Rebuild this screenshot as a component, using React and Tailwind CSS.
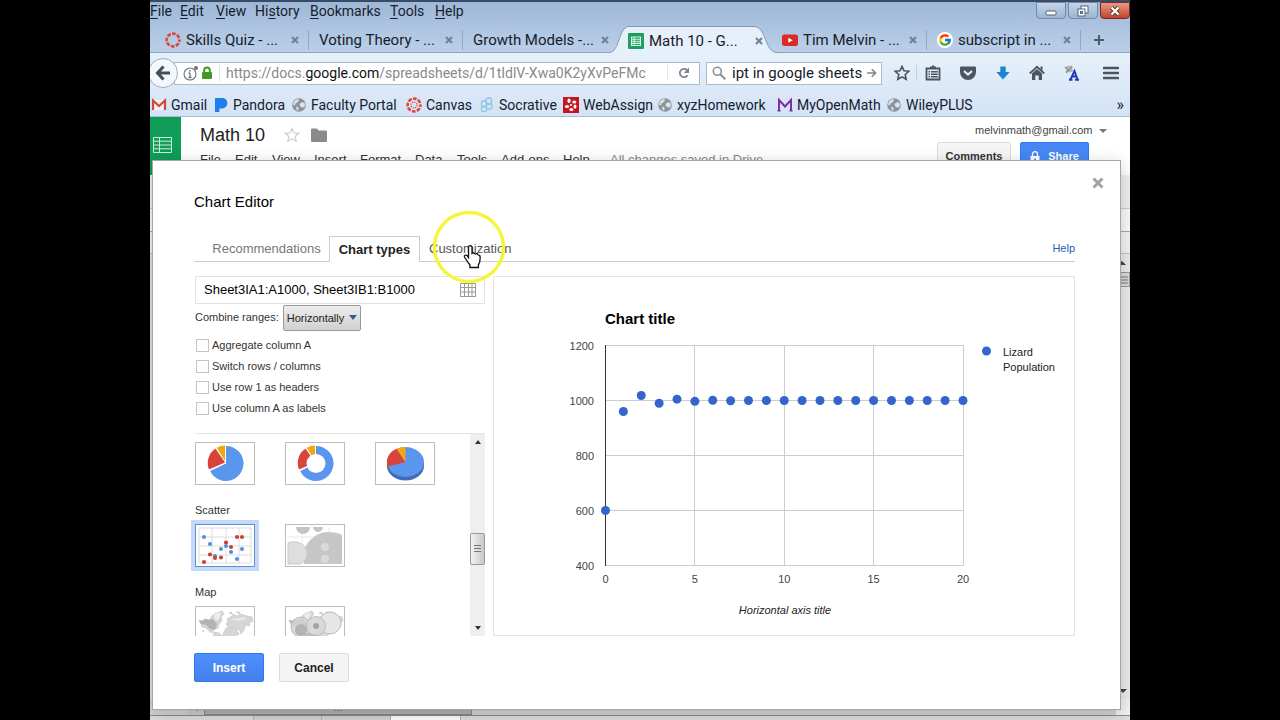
import React from "react";
import { FcGoogle } from "react-icons/fc";

const points = [600, 960, 1018, 990, 1005, 997, 1001, 999, 1000, 1000, 1000, 1000, 1000, 1000, 1000, 1000, 1000, 1000, 1000, 1000, 1000];

/* ---------- small icons ---------- */

const CanvasIcon = () => (
  <svg viewBox="0 0 16 16" className="size-4 shrink-0">
    <circle cx="8" cy="8" r="6.4" fill="none" stroke="#e0453a" strokeWidth="2.6" strokeDasharray="3.7 1.33" strokeDashoffset="1.8" />
  </svg>
);
const CanvasDottedIcon = () => (
  <svg viewBox="0 0 16 16" className="size-4 shrink-0">
    <circle cx="8" cy="8" r="6.4" fill="none" stroke="#e0453a" strokeWidth="2.6" strokeDasharray="3.7 1.33" strokeDashoffset="1.8" />
    <circle cx="8" cy="8" r="3" fill="none" stroke="#e0453a" strokeWidth="1.3" strokeDasharray="1.2 1.16" />
  </svg>
);
const SheetsIcon = () => (
  <svg viewBox="0 0 16 16" className="size-4 shrink-0">
    <rect width="16" height="16" rx="1" fill="#1e9e5d" />
    <path d="M3.5 4h9v8.5h-9zM3.5 6.2h9M3.5 8.3h9M3.5 10.4h9M6.2 4v8.5" fill="none" stroke="#d8f5e3" strokeWidth="1.1" />
  </svg>
);
const YoutubeIcon = () => (
  <svg viewBox="0 0 16 16" className="size-4 shrink-0">
    <rect x="0" y="2.5" width="16" height="11.5" rx="2.5" fill="#d92a27" />
    <path d="M6.3 5.8v5l4.4-2.5z" fill="#fff" />
  </svg>
);
const GoogleIcon = () => (
  <span className="flex size-4 shrink-0 items-center justify-center rounded-full bg-white">
    <FcGoogle className="size-3.5" />
  </span>
);
const GmailIcon = () => (
  <svg viewBox="0 0 16 16" className="size-4 shrink-0">
    <rect x="2" y="3" width="12" height="10" fill="#f4f4f4" />
    <path d="M2 13V3.5l6 5.5 6-5.5V13" fill="none" stroke="#d6453c" strokeWidth="2.2" />
  </svg>
);
const PandoraIcon = () => (
  <svg viewBox="0 0 16 16" className="size-4 shrink-0">
    <path d="M2 1h6.5c3.8 0 5.8 2 5.8 4.9 0 3.6-2.6 5.6-6.3 5.6H6.4V15H2z" fill="#1e7df0" />
  </svg>
);
const GlobeIcon = () => (
  <svg viewBox="0 0 16 16" className="size-4 shrink-0">
    <circle cx="8" cy="8" r="6.8" fill="#8d939a" />
    <path d="M3 4.5c2-2.3 4-2.4 5-2l-1 2.6-2.4 1.2L4 8.6 2 7.4zM8.6 6.8l3-1.7 2.4 1.7-.6 3.4-2.6.4-2-1.8zM5.2 9.6l2.4.9-.4 3-1.6-.5z" fill="#dde3ea" />
  </svg>
);
const SocrativeIcon = () => (
  <svg viewBox="0 0 16 16" className="size-4 shrink-0" fill="none" stroke="#8cc6e0" strokeWidth="1.3">
    <rect x="7" y="1" width="5.5" height="6" rx="2" />
    <rect x="2.5" y="4" width="5" height="5.5" rx="1.8" />
    <rect x="7.5" y="7" width="5.5" height="5" rx="1.8" />
    <rect x="2.5" y="9.5" width="5" height="5" rx="1.8" />
  </svg>
);
const WebAssignIcon = () => (
  <svg viewBox="0 0 16 16" className="size-4 shrink-0">
    <rect width="16" height="16" fill="#c5161d" />
    <g fill="#fff">
      <ellipse cx="6" cy="3.8" rx="1.6" ry="2.2" />
      <ellipse cx="11.3" cy="5" rx="2.1" ry="1.6" />
      <ellipse cx="12" cy="9.6" rx="1.5" ry="2.1" />
      <ellipse cx="8.4" cy="12.6" rx="2" ry="1.5" />
      <ellipse cx="4" cy="9.4" rx="2.1" ry="1.5" />
      <circle cx="8" cy="8" r="1.1" />
    </g>
  </svg>
);
const MomIcon = () => (
  <svg viewBox="0 0 16 16" className="size-4 shrink-0">
    <path d="M.5 13.6h3M2 13.5V3l6 6.5L14 3v10.5M12.5 13.6h3" fill="none" stroke="#7a2a9c" strokeWidth="1.9" />
  </svg>
);
const Cross = ({ className }) => (
  <svg viewBox="0 0 8 8" className={className}>
    <path d="M1 1l6 6M7 1L1 7" stroke="currentColor" strokeWidth="2" />
  </svg>
);

/* ---------- browser chrome ---------- */

const menus = [
  ["", "F", "ile"],
  ["", "E", "dit"],
  ["", "V", "iew"],
  ["Hi", "s", "tory"],
  ["", "B", "ookmarks"],
  ["", "T", "ools"],
  ["", "H", "elp"],
];

function TitleBar() {
  return (
    <div className="flex h-[26px] items-start justify-between border-t-2 border-[#3b4a63]">
      <div className="grid grid-cols-[30px_36px_39px_55px_80px_45px_45px] text-sm leading-[18px] text-[#16202c]">
        {menus.map(([a, b, c]) => (
          <button key={b + c} className="text-left whitespace-nowrap">
            {a}
            <span className="underline underline-offset-2">{b}</span>
            {c}
          </button>
        ))}
      </div>
      <div className="flex gap-0.5 text-[#2c3a4c]">
        <button aria-label="Minimize" className="flex h-[17px] w-[30px] items-center justify-center rounded-b-sm border border-[#7489a5] bg-linear-to-b from-[#c3d4e8] to-[#9db5d2]">
          <svg viewBox="0 0 12 12" className="size-3"><rect x="1" y="6" width="10" height="4" rx="1" fill="#fff" stroke="#52627a" /></svg>
        </button>
        <button aria-label="Restore" className="flex h-[17px] w-[30px] items-center justify-center rounded-b-sm border border-[#7489a5] bg-linear-to-b from-[#c3d4e8] to-[#9db5d2]">
          <svg viewBox="0 0 12 12" className="size-3" fill="#fff" stroke="#52627a"><rect x="4" y="1" width="7" height="7" /><rect x="1" y="4" width="7" height="7" /><rect x="3.5" y="6.5" width="2" height="2" fill="#9db5d2" /></svg>
        </button>
        <button aria-label="Close" className="flex h-[17px] w-[30px] items-center justify-center rounded-b-sm border border-[#7b2a22] bg-linear-to-b from-[#e59a86] to-[#c2412b]">
          <svg viewBox="0 0 12 12" className="size-3"><path d="M2.5 2.5l7 7M9.5 2.5l-7 7" stroke="#52302c" strokeWidth="4" /><path d="M2.5 2.5l7 7M9.5 2.5l-7 7" stroke="#fff" strokeWidth="2.4" /></svg>
        </button>
      </div>
    </div>
  );
}

function Tab({ icon, title }) {
  return (
    <div className="flex w-[154px] items-center gap-[5px] border-b border-[#8fa5c0] pt-0.5 pl-2.5">
      {icon}
      <button className="flex-1 text-left whitespace-nowrap">{title}</button>
      <button aria-label="Close tab"><Cross className="size-2 text-[#6f8097]" /></button>
      <span className="ml-1 h-5 w-px bg-[#92a7c3]" />
    </div>
  );
}

function TabStrip() {
  return (
    <div className="flex h-[27px] text-[15px] leading-5 text-[#16202c]">
      <div className="w-[5px] border-b border-[#8fa5c0]" />
      <Tab icon={<CanvasIcon />} title="Skills Quiz - ..." />
      <Tab title="Voting Theory - ..." />
      <div className="flex w-[146px] items-center border-b border-[#8fa5c0] pt-0.5 pl-2.5">
        <button className="flex-1 text-left whitespace-nowrap">Growth Models -...</button>
        <button aria-label="Close tab"><Cross className="size-2 text-[#6f8097]" /></button>
      </div>
      <div className="relative flex w-[173px] items-center gap-[5px] pt-0.5 pr-[19px] pl-[19px]">
        <svg viewBox="0 0 173 27" preserveAspectRatio="none" className="absolute inset-0 h-full w-full">
          <path d="M0 26.5C11 26.5 9 1 20 .5H145C158 1 155 26 168 26.5H173V27H0z" fill="#e6f0fa" />
          <path d="M0 26.5C11 26.5 9 1 20 .5H145C158 1 155 26 168 26.5H173" fill="none" stroke="#8098b6" />
        </svg>
        <div className="relative"><SheetsIcon /></div>
        <button className="relative flex-1 text-left whitespace-nowrap">Math 10 - G...</button>
        <button aria-label="Close tab" className="relative"><Cross className="size-2 text-[#6f8097]" /></button>
      </div>
      <div className="flex w-[145px] items-center gap-[5px] border-b border-[#8fa5c0] pt-0.5">
        <YoutubeIcon />
        <button className="flex-1 text-left whitespace-nowrap">Tim Melvin - ...</button>
        <button aria-label="Close tab"><Cross className="size-2 text-[#6f8097]" /></button>
        <span className="ml-1 h-5 w-px bg-[#92a7c3]" />
      </div>
      <Tab icon={<GoogleIcon />} title="subscript in ..." />
      <button aria-label="New tab" className="flex flex-1 items-center border-b border-[#8fa5c0] pt-0.5 pl-[13px]">
        <svg viewBox="0 0 10 10" className="size-2.5"><path d="M5 0v10M0 5h10" stroke="#4d5b6d" strokeWidth="2" /></svg>
      </button>
    </div>
  );
}

function NavBar() {
  return (
    <div className="flex h-10 items-center text-[15px] leading-5">
      <button aria-label="Back" className="z-10 -ml-0.5 flex size-[30px] shrink-0 items-center justify-center rounded-full border border-[#9aacc2] bg-[#f4f8fd]">
        <svg viewBox="0 0 16 16" className="size-4"><path d="M8.5 1.5L2.5 8l6 6.5M3 8h12" fill="none" stroke="#444f5c" strokeWidth="3" /></svg>
      </button>
      <div className="-ml-1 flex h-[23px] min-w-0 flex-1 items-center border border-[#aab9cc] bg-white pl-2">
        <svg viewBox="0 0 16 16" className="size-4 shrink-0" fill="none" stroke="#6d7278">
          <circle cx="7" cy="9" r="6" strokeWidth="1.1" />
          <path d="M7 8v4.5M5.6 8H7M5.5 12.5h3" strokeWidth="1.3" />
          <circle cx="7" cy="5.8" r=".9" fill="#6d7278" stroke="none" />
          <circle cx="13" cy="3" r="2" fill="#6d7278" stroke="none" />
        </svg>
        <svg viewBox="0 0 12 14" className="ml-0.5 h-3.5 w-3 shrink-0"><rect x="1" y="6" width="10" height="7" rx="1" fill="#3f9a23" /><path d="M3.2 7V4.3a2.8 2.8 0 015.6 0V7" fill="none" stroke="#3f9a23" strokeWidth="2" /></svg>
        <span className="mx-1.5 h-4 w-px shrink-0 bg-[#dfe3e8]" />
        <a href="#url" className="min-w-0 flex-1 overflow-hidden text-sm leading-5 whitespace-nowrap text-[#8a8a8a]">
          https://docs.<span className="text-[#111]">google.com</span>/spreadsheets/d/1tIdlV-Xwa0K2yXvPeFMc
        </a>
        <span className="h-4 w-px bg-[#e3e7ec]" />
        <button aria-label="Reload" className="flex w-[31px] justify-center">
          <svg viewBox="0 0 12 12" className="size-3"><path d="M9.6 8.2A4.2 4.2 0 119 3" fill="none" stroke="#7b828b" strokeWidth="1.8" /><path d="M11 .6V6H5.8z" fill="#7b828b" /></svg>
        </button>
      </div>
      <div className="ml-1.5 flex h-[23px] w-[176px] shrink-0 items-center border border-[#aab9cc] bg-white pr-1 pl-[5px]">
        <svg viewBox="0 0 14 14" className="size-3.5 shrink-0"><circle cx="5.3" cy="5.3" r="4" fill="none" stroke="#8b9097" strokeWidth="1.6" /><path d="M8.3 8.3l5 5" stroke="#8b9097" strokeWidth="2" /></svg>
        <input aria-label="Search" defaultValue="ipt in google sheets" className="ml-1.5 min-w-0 flex-1 bg-transparent text-[#16202c] outline-none" />
        <button aria-label="Go"><svg viewBox="0 0 10 10" className="size-2.5"><path d="M0 5h8M4.8 1.2L8.6 5 4.8 8.8" fill="none" stroke="#7f868f" strokeWidth="1.6" /></svg></button>
      </div>
      <div className="flex items-center text-[#4c555f]">
        <button aria-label="Bookmark this page" className="ml-3">
          <svg viewBox="0 0 16 16" className="size-4"><path d="M8 1.4l2 4.4 4.8.5-3.6 3.2 1 4.8L8 11.9l-4.2 2.4 1-4.8L1.2 6.3 6 5.8z" fill="none" stroke="currentColor" strokeWidth="1.6" /></svg>
        </button>
        <span className="ml-1.5 h-4 w-px bg-[#c3cfde]" />
        <button aria-label="Bookmarks" className="ml-2">
          <svg viewBox="0 0 16 16" className="size-4"><path d="M1.5 3.5h13v11h-13z" fill="none" stroke="currentColor" strokeWidth="1.8" /><path d="M5 2.5h6M8 .5v3" stroke="currentColor" strokeWidth="2" /><path d="M3.5 6.7H5M6 6.7h6.8M3.5 9.2H5M6 9.2h6.8M3.5 11.7H5M6 11.7h6.8" stroke="currentColor" strokeWidth="1.4" /></svg>
        </button>
        <button aria-label="Pocket" className="ml-[18px]">
          <svg viewBox="0 0 18 16" className="h-4 w-[18px]"><path d="M1 2.5Q1 1.5 2 1.5h14q1 0 1 1V7a8 8 0 01-16 0z" fill="currentColor" /><path d="M5 6l4 3.6L13 6" fill="none" stroke="#e6eff9" strokeWidth="2" /></svg>
        </button>
        <button aria-label="Downloads" className="ml-[18px]">
          <svg viewBox="0 0 16 16" className="size-4"><path d="M5.3 1.5h5.4V7h4L8 14.5 1.3 7h4z" fill="#1c86d4" /></svg>
        </button>
        <button aria-label="Home" className="ml-[18px]">
          <svg viewBox="0 0 16 16" className="size-4"><path d="M.8 8.5L8 1.8l7.2 6.7" fill="none" stroke="currentColor" strokeWidth="1.8" /><path d="M11.500 1.500h2v4l-2-1.800zM3 8.600l5-4.600 5 4.600V15H9.700v-4.500H6.300V15H3z" fill="currentColor" /></svg>
        </button>
        <button aria-label="Text tools" className="ml-[18px]">
          <svg viewBox="0 0 18 16" className="h-4 w-[18px]"><path d="M2 2l4-1.5L10 2 9 4l2 2-4 1.5-5-1 2-2z" fill="#b1b6bd" /><path d="M2 2l3 3M9 1L6 5M3 8l3-3" stroke="#8a8f98" strokeWidth="1.2" /><path d="M6 14.8h3.5M12 14.8h4M7.500 14.500L11.500 6l3 8.500M9 11.500h4.500" fill="none" stroke="#2236c0" strokeWidth="1.9" /></svg>
        </button>
        <button aria-label="Open menu" className="mr-[11px] ml-[22px]">
          <svg viewBox="0 0 16 14" className="h-3.5 w-4"><path d="M1 2h14M1 7h14M1 12h14" stroke="currentColor" strokeWidth="2.6" strokeLinecap="round" /></svg>
        </button>
      </div>
    </div>
  );
}

const bookmarks = [
  [GmailIcon, "Gmail"],
  [PandoraIcon, "Pandora"],
  [GlobeIcon, "Faculty Portal"],
  [CanvasDottedIcon, "Canvas"],
  [SocrativeIcon, "Socrative"],
  [WebAssignIcon, "WebAssign"],
  [GlobeIcon, "xyzHomework"],
  [MomIcon, "MyOpenMath"],
  [GlobeIcon, "WileyPLUS"],
];

function BookmarksBar() {
  return (
    <div className="grid h-6 grid-cols-[62px_78px_115px_73px_84px_94px_120px_109px_1fr_auto] items-center border-b border-[#a9bcd3] pr-1.5 pl-px text-sm leading-5 text-[#16202c]">
      {bookmarks.map(([Icon, name]) => (
        <a key={name} href={"#" + name} className="flex items-center gap-1 whitespace-nowrap"><Icon />{name}</a>
      ))}
      <button aria-label="More bookmarks" className="text-base leading-5">»</button>
    </div>
  );
}

/* ---------- spreadsheet behind the dialog ---------- */

function SheetPage() {
  return (
    <div className="flex h-full flex-col bg-white">
      <div className="flex h-[58px] shrink-0 overflow-hidden">
        <div className="flex w-[31px] shrink-0 justify-start bg-[#0f9d58] pt-5 pl-[3px]">
          <svg viewBox="0 0 19 16" className="h-4 w-[19px]"><path d="M.5.5h18v15H.5zM.5 4.2h18M.5 8h18M.5 11.8h18M6.5.5v15" fill="none" stroke="#cdeedd" /></svg>
        </div>
        <div className="flex-1 pl-[19px]">
          <div className="flex h-9 items-center">
            <h1 className="w-[84px] text-lg leading-6 text-[#222]">Math 10</h1>
            <button aria-label="Star"><svg viewBox="0 0 16 16" className="size-4"><path d="M8 1.4l1.9 4.5 4.9.4-3.7 3.2 1.1 4.8L8 11.8l-4.2 2.5 1.1-4.8L1.2 6.3l4.9-.4z" fill="none" stroke="#cfcfcf" strokeWidth="1.2" /></svg></button>
            <button aria-label="Folder" className="ml-[11px]"><svg viewBox="0 0 16 14" className="h-3.5 w-4"><path d="M0 1.5Q0 .5 1 .5h5l1.5 2H15q1 0 1 1V13q0 1-1 1H1q-1 0-1-1z" fill="#8a8a8a" /></svg></button>
          </div>
          <div className="grid grid-cols-[35px_37px_42px_46px_55px_42px_44px_62px_47px_auto] justify-start text-[13px] leading-[14px] whitespace-nowrap text-[#333]">
            {["File", "Edit", "View", "Insert", "Format", "Data", "Tools", "Add-ons", "Help"].map((m) => (
              <button key={m} className="text-left">{m}</button>
            ))}
            <span className="text-[#888]">All changes saved in Drive</span>
          </div>
        </div>
        <div className="flex w-[193px] flex-col">
          <button className="flex h-[25px] shrink-0 items-center gap-1.5 pt-0.5 pl-[38px] text-[11px] text-[#444]">
            melvinmath@gmail.com
            <svg viewBox="0 0 8 4" className="h-1 w-2 shrink-0"><path d="M0 0h8L4 4z" fill="#777" /></svg>
          </button>
          <div className="flex gap-[9px] text-[11px] font-bold">
            <button className="h-[29px] w-[74px] rounded-xs border border-[#dcdcdc] bg-[#f5f5f5] text-[#333]">Comments</button>
            <button className="flex h-[29px] w-[69px] items-center justify-center gap-2 rounded-xs border border-[#3079ed] bg-[#4787f5] text-white">
              <svg viewBox="0 0 10 12" className="h-3 w-2.5"><rect x=".5" y="5" width="9" height="7" fill="#fff" /><path d="M2.5 5.5V3.2a2.5 2.5 0 015 0v2.3" fill="none" stroke="#fff" strokeWidth="1.3" /><circle cx="5" cy="8.3" r="1" fill="#4787f5" /></svg>
              Share
            </button>
          </div>
        </div>
      </div>
      <div className="h-[34px] border-b border-[#ccc] bg-[#efefef]" />
      <div className="h-[23px] border-b border-[#aaa] bg-[#fafafa]" />
      <div className="h-[22px] border-b border-[#c4c4c4] bg-[#f3f3f3]" />
      <div className="flex flex-1 justify-end bg-[#e4e4e4]">
        <div className="flex w-[15px] flex-col items-end justify-between border-l border-[#ccc] bg-[#ebebeb]">
          <div className="flex flex-col items-end">
            <div className="flex h-[18px] items-center pr-1"><svg viewBox="0 0 8 4" className="h-1 w-2"><path d="M0 4h8L4 0z" fill="#444" /></svg></div>
            <div className="flex h-[15px] w-[15px] items-center justify-end border border-[#999] bg-[#dcdcdc] pr-px"><svg viewBox="0 0 8 8" className="size-2"><path d="M0 1h8M0 4h8M0 7h8" stroke="#777" /></svg></div>
          </div>
          <div className="pr-[3px] pb-1.5"><svg viewBox="0 0 8 4" className="h-1 w-2"><path d="M0 0h8L4 4z" fill="#444" /></svg></div>
        </div>
      </div>
      <div className="flex h-[17px] shrink-0 items-end border-b border-[#8c8c8c] bg-[#d6d6d6] pl-[37px]">
        <svg viewBox="0 0 17 16" className="h-4 w-[17px]"><rect width="17" height="16" fill="#cfcfcf" /><path d="M11 6v6l-4-3z" fill="#444" /></svg>
        <div className="flex h-4 w-[268px] items-center justify-center border border-[#888] bg-[#b5b5b5]">
          <svg viewBox="0 0 8 8" className="size-2"><path d="M1 0v8M4 0v8M7 0v8" stroke="#555" /></svg>
        </div>
        <div className="flex-1" />
        <svg viewBox="0 0 24 16" className="h-4 w-6"><path d="M0 5v6l4-3z" fill="#555" /><rect x="10" width="14" height="16" fill="#f2f2f2" /></svg>
      </div>
      <div className="flex h-1 shrink-0 bg-[#dedede] pl-[103px]">
        <div className="w-[69px] border-x border-[#b5b5b5] bg-[#d3d3d3]" />
        <div className="w-[69px] border-r border-[#b5b5b5] bg-[#d3d3d3]" />
        <div className="w-[70px] border-r border-[#b5b5b5] bg-white" />
      </div>
    </div>
  );
}

/* ---------- chart type thumbnails ---------- */

const PieThumb = () => (
  <svg viewBox="0 0 58 41" className="h-full w-full">
    <path d="M30 20.5L30 3A17.5 17.5 0 1114.2 28z" fill="#5a95ee" />
    <path d="M29 19.5L13 26.5A17.5 17.5 0 0119.5 5.5z" fill="#d9443a" />
    <path d="M29 18L20.8 4.7A17 17 0 0129 2.5z" fill="#f2a60f" />
  </svg>
);
const DonutThumb = () => (
  <svg viewBox="0 0 58 41" className="h-full w-full">
    <path d="M30 20.5L30 3A17.5 17.5 0 1114.2 28z" fill="#5a95ee" />
    <path d="M29 19.5L13 26.5A17.5 17.5 0 0119.5 5.5z" fill="#d9443a" />
    <path d="M29 18L20.8 4.7A17 17 0 0129 2.5z" fill="#f2a60f" />
    <circle cx="30" cy="20.5" r="9.5" fill="#fff" />
  </svg>
);
const Pie3dThumb = () => (
  <svg viewBox="0 0 58 41" className="h-full w-full">
    <path d="M11 19v4a18.5 14.5 0 0037 0v-4z" fill="#3f6dbb" />
    <path d="M11 19v4l2 5v-4z" fill="#a5342c" />
    <ellipse cx="29.5" cy="19" rx="18.5" ry="15" fill="#5a95ee" />
    <path d="M29.5 19L11.8 23.5A18.5 15 0 0120.5 5.8z" fill="#d9443a" />
    <path d="M29.5 19L20.5 5.8A18.5 15 0 0129.5 4z" fill="#f2a60f" />
  </svg>
);
const blueDots = [[8, 12], [14, 19], [25, 24], [30, 21], [35, 27], [46, 24], [19, 31], [41, 34]];
const redDots = [[41, 12], [46, 12], [30, 17.5], [35, 22], [14, 29.5], [19, 33], [25, 32.5], [8, 37]];
const ScatterThumb = () => (
  <svg viewBox="0 0 58 41" className="h-full w-full">
    <path d="M3 3h52v35H3zM3 12h52M3 21h52M3 30h52M16 3v35M30 3v35M43 3v35" fill="none" stroke="#dcdcdc" />
    {blueDots.map(([x, y]) => <circle key={x + "-" + y} cx={x} cy={y} r="2.1" fill="#5292dc" />)}
    {redDots.map(([x, y]) => <circle key={x + "-" + y} cx={x} cy={y} r="2.1" fill="#cc4137" />)}
  </svg>
);
const BubbleThumb = () => (
  <svg viewBox="0 0 58 41" className="h-full w-full">
    <path d="M2 12h54M2 22h54M2 31h54M16 2v37M43 2v37" stroke="#e8e8e8" />
    <path d="M10 2h14a7 7 0 11-14 0zM27 2h10a5 5 0 11-10 0z" fill="#c4c4c4" />
    <path d="M18 39V25C22 14 32 7 42 7c6 0 11 1 14 3v29z" fill="#c6c6c6" />
    <path d="M2 18c10-4 20 3 19 12-1 5-4 8-7 9H2z" fill="#dedede" stroke="#c9c9c9" />
    <circle cx="39" cy="22" r="4" fill="#dadada" /><circle cx="39" cy="34" r="4" fill="#dadada" />
  </svg>
);
const Continents = () => (
  <g>
    <path d="M3 13l3 1 3-2 4 1 3-4 4-3 6-2 2 3-3 3 1 4-3 3-1 4-4 1-2 4-3-2-3-3-4-1-1-3zM18 25l5 1 4 4-2 4-3 5-3 2-2-8zM27 27l3-6 6-1 4 2 3 5-4 3-1 6-4 5-4-8-4-3zM30 17l2-3-1-2 5-3 1-2 4 2 4-2 6 2 5 1 1 4-4 2 1 3-4-1-2 5-3 4-2-5-3 1-3-3-4 1zM47 30l6 1 1 5-6 1zM33 6l3-1v2zM40 5l4 0-1 2z" fill="#d6d6d6" stroke="#c9c9c9" strokeWidth=".7" />
    <path d="M3 13l3 1 3-2 4 1 4-1 4 5-2 6-5-1-4-4-5-1z" fill="#b3b3b3" />
    <path d="M19 8l3-2 2 1-2 5-2 1zM37 12l6 1 7-2" stroke="#ededed" strokeWidth="1.5" fill="#ededed" />
    <circle cx="7" cy="24" r="1" fill="#cfcfcf" />
  </g>
);
const MapThumb = () => <svg viewBox="0 0 58 41" className="h-full w-full"><Continents /></svg>;
const MapBubbleThumb = () => (
  <svg viewBox="0 0 58 41" className="h-full w-full">
    <Continents />
    <circle cx="44" cy="16" r="11" fill="#e6e6e6" stroke="#bdbdbd" />
    <circle cx="15" cy="20" r="10" fill="#d4d4d4" fillOpacity=".85" stroke="#bcbcbc" />
    <circle cx="30" cy="19" r="9.5" fill="#d8d8d8" fillOpacity=".9" stroke="#bcbcbc" />
    <circle cx="15" cy="23" r="6" fill="#b3b3b3" />
    <circle cx="30" cy="19" r="3" fill="#a5a5a5" />
    <circle cx="23" cy="34" r="8" fill="#bdbdbd" />
  </svg>
);

function Thumb({ label, children }) {
  return <button aria-label={label} className="h-[43px] w-[60px] border border-[#bdbdbd] bg-white">{children}</button>;
}

/* ---------- chart ---------- */

function Chart() {
  const x = (n) => 111.5 + (n * 357.5) / 20;
  const y = (v) => 288.5 - ((v - 400) * 220) / 800;
  return (
    <svg viewBox="0 0 580 358" className="h-full w-full" fontSize="11" fill="#444">
      <text x="111" y="47" fontSize="15" fontWeight="bold" fill="#000">Chart title</text>
      {[400, 600, 800, 1000, 1200].map((v) => (
        <g key={v}>
          <path d={`M112 ${y(v)}H469`} stroke="#ccc" />
          <text x="100" y={y(v) + 4} textAnchor="end">{v}</text>
        </g>
      ))}
      {[0, 5, 10, 15, 20].map((n) => (
        <g key={n}>
          <path d={`M${Math.floor(x(n)) + 0.5} 68V289`} stroke={n ? "#ccc" : "#333"} />
          <text x={x(n)} y="306" textAnchor="middle">{n}</text>
        </g>
      ))}
      {points.map((v, i) => <circle key={i} cx={x(i)} cy={y(v)} r="4.5" fill="#3366cc" />)}
      <circle cx="492.5" cy="74" r="4.5" fill="#3366cc" />
      <text x="509" y="79" fill="#222">Lizard</text>
      <text x="509" y="94" fill="#222">Population</text>
      <text x="291" y="337" textAnchor="middle" fontStyle="italic" fill="#222">Horizontal axis title</text>
    </svg>
  );
}

/* ---------- dialog ---------- */

const options = ["Aggregate column A", "Switch rows / columns", "Use row 1 as headers", "Use column A as labels"];

function ChartEditor() {
  return (
    <div role="dialog" aria-label="Chart Editor" className="absolute top-[43px] right-[9px] bottom-2.5 left-0.5 flex flex-col border border-[#a5a5a5] bg-white pr-[45px] pl-[41px] text-[11px] text-[#333] shadow-[0_4px_16px_rgba(0,0,0,0.2)]">
      <button aria-label="Close" className="absolute top-4 right-4"><Cross className="size-3 text-[#a3a3a3]" /></button>
      <h2 className="pt-[31px] text-[15px] leading-5 text-black">Chart Editor</h2>
      <div className="mt-6 flex h-[26px] shrink-0 items-stretch text-[13px]">
        <button className="w-[135px] border-b border-[#ccc] pl-2.5 text-center text-[#777]">Recommendations</button>
        <button className="w-[91px] border border-b-0 border-[#ccc] font-bold text-[#222]">Chart types</button>
        <button className="border-b border-[#ccc] pl-[9px] text-[#555]">Customization</button>
        <div className="flex flex-1 items-center justify-end border-b border-[#ccc] text-[11px]"><a href="#help" className="text-[#2a5db0]">Help</a></div>
      </div>
      <div className="mt-3.5 flex h-[360px] gap-2">
        <div className="flex w-[291px] shrink-0 flex-col pl-px">
          <div className="flex h-7 shrink-0 items-center border border-[#e2e2e2] px-2">
            <input aria-label="Data range" defaultValue="Sheet3IA1:A1000, Sheet3IB1:B1000" className="min-w-0 flex-1 text-[13px] text-black outline-none" />
            <button aria-label="Select range"><svg viewBox="0 0 16 14" className="h-3.5 w-4"><path d="M.5.5h15v13H.5zM.5 4.5h15M.5 9h15M4.5.5v13M8.5.5v13M12 .5v13" fill="none" stroke="#999" /></svg></button>
          </div>
          <div className="mt-px flex h-[26px] shrink-0 gap-1">
            <label htmlFor="combine" className="flex h-6 items-center">Combine ranges:</label>
            <div className="relative">
              <select id="combine" className="h-[26px] w-[78px] appearance-none rounded-xs border border-[#999] bg-linear-to-b from-[#eee] to-[#d0d0d0] pl-[3px] text-[#222]">
                <option>Horizontally</option>
              </select>
              <svg viewBox="0 0 8 5" className="pointer-events-none absolute top-2.5 right-1 h-[5px] w-2"><path d="M0 0h8L4 5z" fill="#3f5a80" /></svg>
            </div>
          </div>
          <div className="mt-1 flex shrink-0 flex-col">
            {options.map((o) => (
              <label key={o} className="flex h-[21px] items-center gap-[3px] pl-px">
                <input type="checkbox" className="size-[13px] appearance-none border border-[#c4c4c4] bg-white" />
                {o}
              </label>
            ))}
          </div>
          <div className="mt-3.5 flex min-h-0 flex-1 border-t border-[#e5e5e5]">
            <div className="-ml-1 flex-1 overflow-hidden pt-2 pl-1">
              <div className="flex gap-[30px]">
                <Thumb label="Pie chart"><PieThumb /></Thumb>
                <Thumb label="Doughnut chart"><DonutThumb /></Thumb>
                <Thumb label="3D pie chart"><Pie3dThumb /></Thumb>
              </div>
              <h3 className="flex h-[39px] items-end pb-1.5 leading-4">Scatter</h3>
              <div className="flex gap-[30px]">
                <button aria-label="Scatter chart" className="h-[43px] w-[60px] border border-[#5d8fd8] bg-white ring-4 ring-[#c5d8f8]"><ScatterThumb /></button>
                <Thumb label="Bubble chart"><BubbleThumb /></Thumb>
              </div>
              <h3 className="flex h-[39px] items-end pb-1.5 leading-4">Map</h3>
              <div className="flex gap-[30px]">
                <Thumb label="Geo chart"><MapThumb /></Thumb>
                <Thumb label="Geo chart with markers"><MapBubbleThumb /></Thumb>
              </div>
            </div>
            <div className="flex w-[15px] flex-col items-center justify-between bg-[#efefef] py-1.5">
              <svg viewBox="0 0 6 4" className="h-1 w-1.5 shrink-0"><path d="M0 4h6L3 0z" fill="#333" /></svg>
              <div className="mt-7 flex h-8 w-[15px] items-center justify-center rounded-xs border border-[#999] bg-linear-to-r from-[#f2f2f2] to-[#c8c8c8]">
                <svg viewBox="0 0 7 8" className="h-2 w-[7px]"><path d="M0 .5h7M0 3.5h7M0 6.5h7" stroke="#777" /></svg>
              </div>
              <svg viewBox="0 0 6 4" className="h-1 w-1.5 shrink-0"><path d="M0 0h6L3 4z" fill="#333" /></svg>
            </div>
          </div>
        </div>
        <div className="min-w-0 flex-1 border border-[#e5e5e5]"><Chart /></div>
      </div>
      <div className="mt-[17px] flex gap-[15px] text-xs font-bold">
        <button className="h-[29px] w-[70px] rounded-xs border border-[#3079ed] bg-linear-to-b from-[#4d90fe] to-[#4580ea] text-white">Insert</button>
        <button className="h-[29px] w-[70px] rounded-xs border border-[#dcdcdc] bg-[#f4f4f4] text-[#222]">Cancel</button>
      </div>
      <svg viewBox="0 0 74 74" className="pointer-events-none absolute top-[49px] left-[279px] size-[74px]">
        <circle cx="37" cy="37" r="34.5" fill="none" stroke="#f5f53a" strokeWidth="3.4" />
        <path d="M37 36c1.5-1 3 0 3 1.500v6l1.500-.8 1.800 1.300 1.700-.5 1.300 1.500 1.500.5.400 2-.5 4.500-1.300 3v2.500H38v-2.500l-3-4-2.500-4c-.5-1.500 1-2.500 2.500-1.500l1.500 2V37.500c0-.7.2-1.200.5-1.500z" fill="#fff" stroke="#111" strokeWidth="1.3" />
      </svg>
    </div>
  );
}

export default function App() {
  return (
    <div className="flex h-screen min-h-[720px] flex-col bg-black px-[150px] font-['Liberation_Sans',Arial,sans-serif]">
      <header className="shrink-0 overflow-hidden bg-linear-to-b from-[#9cb7d7] via-[#bcd0e8] via-45% to-[#bcd0e8] font-[Roboto,sans-serif]">
        <TitleBar />
        <TabStrip />
        <div className="bg-linear-to-b from-[#e6f0fa] to-[#d3e3f6]">
          <NavBar />
          <BookmarksBar />
        </div>
      </header>
      <main className="relative min-h-0 flex-1 overflow-hidden">
        <SheetPage />
        <ChartEditor />
      </main>
    </div>
  );
}
